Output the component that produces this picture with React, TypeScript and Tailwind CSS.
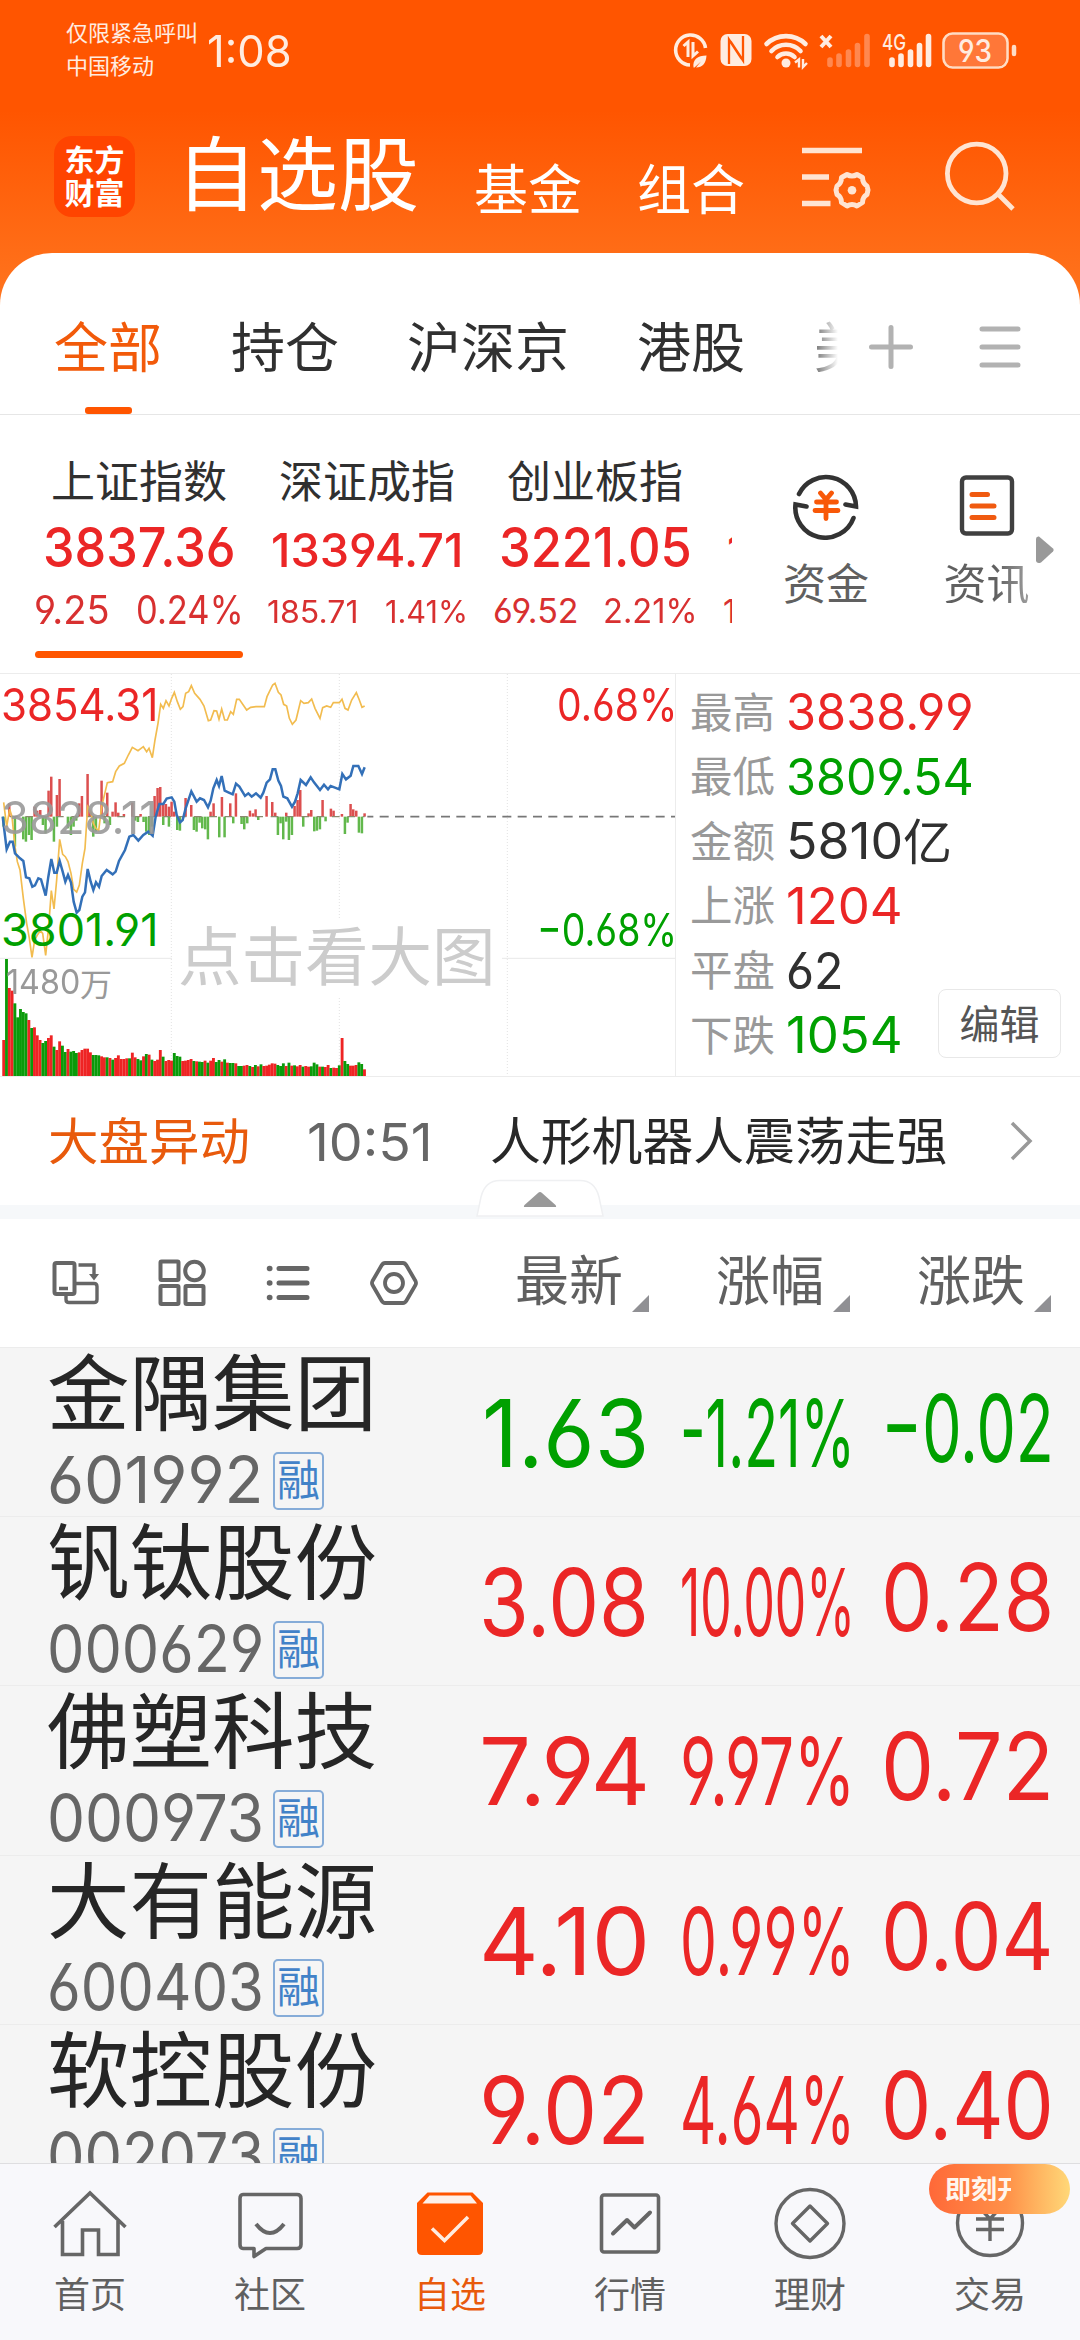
import { useLayoutEffect, useRef, useState } from 'react'
import type { ReactNode } from 'react'

/** Single-line label stretched horizontally so that it always fills `w` pixels. */
function Fit({ w, className = '', children }: { w: number; className?: string; children: ReactNode }) {
  const ref = useRef<HTMLSpanElement>(null)
  const [scale, setScale] = useState(1)
  useLayoutEffect(() => {
    const el = ref.current
    if (el && el.offsetWidth) setScale(w / el.offsetWidth)
  }, [w, children])
  return (
    <span className={'block shrink-0 leading-none ' + className} style={{ width: w }}>
      <span ref={ref} className="inline-block origin-left whitespace-nowrap align-top" style={{ transform: `scaleX(${scale})` }}>
        {children}
      </span>
    </span>
  )
}

const NUM = "font-['Inter',sans-serif] [font-feature-settings:'cv03','cv04'] "
const RED = 'text-[#eb2626] '
const GREEN = 'text-[#00a000] '

/* ---------- status bar ---------- */

function StatusIcons() {
  return (
    <svg className="mt-[28px] ml-[381px] shrink-0" width="350" height="44" viewBox="0 0 350 44" fill="none">
      <g stroke="#ffece0">
        <path d="M32.500 20A15 15 0 1 0 17 37" strokeWidth="3.600" />
        <path d="M10.500 18l4.500-4v15M20 14v14l5-4.500" strokeWidth="3" />
      </g>
      <path d="M20.500 39.500c-1-8 4-12 13-12-.5 8-4 12-10.500 12l5-6-6.500 6z" fill="#ffece0" />
      <rect x="47.500" y="6" width="31" height="32" rx="7" fill="#ffece0" />
      <path d="M56 36V11.500l12.500 19M70 8v24.500L57.500 13.500" stroke="#ff5500" strokeWidth="2.300" />
      <g stroke="#ffece0" strokeWidth="4.600" strokeLinecap="round">
        <path d="M93.500 16a28 28 0 0 1 39 0M98.500 23a20 20 0 0 1 29 0M104.500 29a12 12 0 0 1 17 0" />
      </g>
      <circle cx="113" cy="35" r="4.500" fill="#ffece0" />
      <path d="M122 34.500l4-3v8M130 31v8l4-4" stroke="#ffece0" strokeWidth="2.400" />
      <path d="M148 8l10 11M158 8l-10 11" stroke="#ffece0" strokeWidth="4" />
      <g stroke="#ff8850" strokeWidth="5.600" strokeLinecap="round">
        <path d="M157 32v4.500M166 28v8.500M175.500 24v12.500M184.500 17.500v19M194 8.500v28" />
      </g>
      <g stroke="#ffece0" strokeWidth="5.600" strokeLinecap="round">
        <path d="M219 32v4.500M228 28v8.500M237.500 24v12.500M246.500 17.500v19M255.500 8.500v28" />
      </g>
      <text x="209" y="22" fontSize="21" fontWeight="500" fill="#ffece0" fontFamily="Inter, sans-serif" textLength="24" lengthAdjust="spacingAndGlyphs">4G</text>
      <rect x="271" y="6" width="62" height="32" rx="8" fill="#ff7738" />
      <rect x="270.500" y="5.500" width="64" height="34" rx="9" stroke="#ffdcc4" strokeWidth="2.600" />
      <path d="M341 19v7" stroke="#ffdcc4" strokeWidth="4.500" strokeLinecap="round" />
      <text x="285" y="33.500" fontSize="31" fontWeight="500" fill="#ffece0" fontFamily="Inter, sans-serif" textLength="34" lengthAdjust="spacingAndGlyphs" className="[font-feature-settings:'cv03','cv04']">93</text>
    </svg>
  )
}

function Header() {
  return (
    <header className="h-[253px] shrink-0 text-white">
      <div className="flex h-[104px] items-start pl-[66px] text-[#ffece0]">
        <div className="flex w-[141px] shrink-0 flex-col pt-[20px] text-[22px] leading-none">
          <span>仅限紧急呼叫</span>
          <span className="mt-[11px]">中国移动</span>
        </div>
        <Fit w={85} className={NUM + 'mt-[29px] text-[44px]'}>1:08</Fit>
        <StatusIcons />
      </div>
      <div className="flex items-start pl-[54px]">
        <div className="mt-[32px] flex size-[81px] shrink-0 flex-col items-center rounded-[18px] bg-[#ff4400] pt-[6px] text-[30px] leading-[33px] font-bold">
          <span>东方</span>
          <span>财富</span>
        </div>
        <span className="mt-[24px] ml-[41px] w-[243px] shrink-0 text-[81px] leading-none">自选股</span>
        <span className="mt-[56px] ml-[55px] w-[108px] shrink-0 text-[54px] leading-none">基金</span>
        <span className="mt-[56px] ml-[55px] w-[108px] shrink-0 text-[54px] leading-none">组合</span>
        <svg className="mt-[39px] ml-[57px] shrink-0" width="72" height="70" viewBox="0 0 72 70" fill="none" stroke="#ffe4d2" strokeWidth="5.500">
          <path d="M0 7.500h60M0 34h27M0 60.500h28.500" />
          <path strokeWidth="5" strokeLinejoin="round" d="M45 31.500Q50 34.500 55 31.500L60.500 34.500Q60.500 40 65 43L66 47L65 51.500Q60.500 54 60.500 59.500L55 63Q50 60 45 63L39.500 59.500Q39.500 54 35 51.500L34 47L35 43Q39.500 40 39.500 34.500Z" />
          <circle cx="50" cy="47.300" r="4.300" fill="#ffe4d2" stroke="none" />
        </svg>
        <svg className="mt-[34px] ml-[70px] shrink-0" width="76" height="76" viewBox="0 0 76 76" fill="none" stroke="#ffe4d2" strokeWidth="4.800">
          <circle cx="32.700" cy="35.500" r="29.300" />
          <path d="M54 56l15 15" />
        </svg>
      </div>
    </header>
  )
}

/* ---------- group tabs ---------- */

function GroupTabs() {
  return (
    <div className="flex h-[162px] shrink-0 items-start border-b border-[#e6e6e6] pl-[54px] text-[54px] leading-none text-[#303030]">
      <div className="flex w-[108px] shrink-0 flex-col items-center pt-[65px] text-[#f25a0a]">
        <span>全部</span>
        <span className="mt-[35px] h-[7px] w-[47px] rounded-[3px] bg-[#ff5500]" />
      </div>
      <span className="mt-[65px] ml-[69px] w-[108px] shrink-0">持仓</span>
      <span className="mt-[65px] ml-[68px] w-[162px] shrink-0">沪深京</span>
      <span className="mt-[65px] ml-[68px] w-[108px] shrink-0">港股</span>
      <span className="mt-[65px] ml-[69px] w-[24px] shrink-0 overflow-hidden bg-linear-to-r from-[#707070] to-white bg-clip-text text-transparent">美</span>
      <svg className="mt-[71px] ml-[30px] shrink-0" width="46" height="46" viewBox="0 0 46 46" stroke="#b2b2b2" strokeWidth="5" strokeLinecap="round">
        <path d="M3.500 23h39M23 3.500v39" />
      </svg>
      <svg className="mt-[71px] ml-[63px] shrink-0" width="46" height="46" viewBox="0 0 46 46" stroke="#b2b2b2" strokeWidth="5" strokeLinecap="round">
        <path d="M5 5h36M5 23h36M5 41h36" />
      </svg>
    </div>
  )
}

/* ---------- indices ---------- */

function IndexCard({ name, value, vw, vc, a, aw, b, bw, gap, sc, active }: {
  name: string; value: string; vw: number; vc: string; a: string; aw: number; b: string; bw: number; gap: number; sc: string; active?: boolean
}) {
  return (
    <div className="flex w-[228px] shrink-0 flex-col items-center pt-[42px]">
      <span className="text-[44px] leading-none text-[#303030]">{name}</span>
      <div className="mt-[19px] flex h-[54px] items-center">
        <Fit w={vw} className={NUM + RED + 'font-medium ' + vc}>{value}</Fit>
      </div>
      <div className="mt-[15px] flex h-[40px] items-end" style={{ columnGap: gap }}>
        <Fit w={aw} className={NUM + 'text-[#d83030] ' + sc}>{a}</Fit>
        <Fit w={bw} className={NUM + 'text-[#d83030] ' + sc}>{b}</Fit>
      </div>
      {active && <span className="mt-[22px] h-[7px] w-[208px] rounded-full bg-[#ff5500]" />}
    </div>
  )
}

function IndexStrip() {
  return (
    <div className="flex h-[258px] shrink-0 items-start">
      <div className="flex w-[732px] shrink-0 overflow-hidden pl-[25px]">
        <IndexCard name="上证指数" value="3837.36" vw={193} vc="text-[55px]" a="9.25" aw={76} b="0.24%" bw={108} gap={26} sc="text-[39px]" active />
        <IndexCard name="深证成指" value="13394.71" vw={192} vc="pt-[5px] text-[47px]" a="185.71" aw={91} b="1.41%" bw={83} gap={27} sc="pb-[2px] text-[31px]" />
        <IndexCard name="创业板指" value="3221.05" vw={193} vc="text-[55px]" a="69.52" aw={86} b="2.21%" bw={94} gap={24} sc="pb-[1px] text-[34px]" />
        <div className="w-[40px] shrink-0">
          <div className={NUM + RED + 'mt-[112px] ml-[18px] text-[47px] leading-none font-medium'}>1</div>
          <div className={NUM + 'mt-[22px] ml-[14px] text-[32px] leading-none text-[#d83030]'}>1</div>
        </div>
      </div>
      <div className="flex w-[188px] shrink-0 flex-col items-center pt-[53px]">
        <svg width="72" height="72" viewBox="0 0 72 72" fill="none" strokeLinecap="round">
          <g stroke="#333" strokeWidth="4.600">
            <path d="M9 26A30 30 0 0 1 66 38.500L55.500 36.500M63.500 50A30 30 0 0 1 5.500 36.500L16.500 38.500" strokeLinejoin="miter" />
          </g>
          <path d="M30.500 25l5.500 6.500 5.500-6.500M26.500 34h20M25 42.500h23M36 31.500v19" stroke="#f85808" strokeWidth="4.800" />
        </svg>
        <span className="mt-[20px] text-[43px] leading-none text-[#606060]">资金</span>
      </div>
      <div className="flex w-[133px] shrink-0 flex-col items-center pt-[53px]">
        <svg width="72" height="72" viewBox="0 0 72 72" fill="none" strokeLinecap="round">
          <rect x="11" y="9.500" width="50" height="56" rx="4" stroke="#404040" strokeWidth="4.400" />
          <path d="M21 26.500h15.500M21 38h22M21 49.500h22" stroke="#f05a10" strokeWidth="5" />
        </svg>
        <span className="mt-[20px] bg-linear-to-r from-[#606060] from-60% to-[#a0a0a0] bg-clip-text text-[43px] leading-none text-transparent">资讯</span>
      </div>
      <svg className="mt-[121px] -ml-[17px] shrink-0" width="20" height="28" viewBox="0 0 20 28">
        <path d="M0 3Q0 0 3 0.500L17 12.500Q18.500 14 17 15.500L5 26.500Q1 28 0 25Z" fill="#999" />
      </svg>
    </div>
  )
}

/* ---------- intraday chart ---------- */

const X0 = 11
const STEP = 8.39
const BASE = 1248

// One entry per minute: top of the volume bar and its direction.
const VOLUME =
  '1140r 897g 984r 992r 1030g 1072g 1047g 1056g 1060g 1080r 1104g 1102r 1126r 1140r 1149g 1143g 1134r 1126r 1160g 1170r 1144r 1157g 1176g 1167r 1175g 1173g 1179g 1177r 1170r 1166r 1166r 1177r 1185g 1185g 1186g 1189r 1192r 1192g 1194r 1199g 1194r 1186r 1197r 1197r 1195r 1195g 1178r 1192r 1197g 1201g 1189r 1182g 1184r 1199g 1203r 1199r 1170r 1190g 1203r 1200r 1202r 1179g 1188g 1190g 1203r 1202r 1200r 1197r 1203g 1204r 1205g 1206g 1202r 1208g 1202r 1194r 1206g 1200g 1205r 1198g 1208r 1209g 1209g 1210r 1218g 1218g 1217r 1215r 1218g 1221r 1215g 1219r 1213g 1218r 1217r 1214r 1210r 1211r 1215g 1218g 1210g 1218r 1208g 1217r 1216g 1219r 1215r 1220g 1218r 1220r 1219g 1208g 1213g 1220r 1220g 1221r 1215r 1224g 1223r 1224r 1216g 1134r 1203g 1212g 1217r 1217r 1215r 1207g 1212g 1228r'
    .split(' ')
    .map((s) => ({ top: parseInt(s, 10), up: s.endsWith('r') }))

const UP_BARS: [number, number][] = [[28, 430], [104, 440], [112, 452], [121, 450], [146, 392], [154, 350], [171, 405], [179, 357], [238, 430], [246, 408], [263, 342], [271, 455], [305, 362], [322, 398], [338, 455], [347, 427], [355, 458], [372, 462], [397, 428], [422, 462], [464, 408], [473, 384], [481, 381], [490, 430], [498, 432], [507, 440], [515, 425], [523, 455], [557, 414], [574, 435], [632, 455], [641, 430], [666, 411], [691, 430], [708, 400], [750, 452], [767, 448], [759, 460], [800, 408], [817, 426], [826, 458], [859, 458], [884, 438], [893, 420], [901, 390], [926, 460], [934, 450], [968, 420], [993, 446], [1001, 452], [1026, 462], [1052, 432], [1060, 448], [1069, 452], [1094, 460]]
const DOWN_BARS: [number, number][] = [[11, 500], [45, 560], [70, 538], [78, 545], [87, 525], [95, 540], [129, 495], [137, 520], [162, 545], [171, 500], [204, 505], [213, 525], [221, 500], [229, 482], [280, 530], [288, 515], [314, 490], [330, 495], [406, 482], [414, 486], [431, 486], [439, 515], [448, 525], [456, 500], [490, 495], [507, 500], [532, 510], [540, 512], [582, 510], [590, 515], [599, 488], [607, 505], [616, 508], [624, 538], [658, 532], [674, 532], [700, 490], [725, 492], [733, 508], [742, 490], [775, 480], [834, 525], [842, 490], [850, 538], [859, 485], [867, 540], [876, 525], [910, 500], [943, 514], [951, 512], [960, 508], [977, 484], [1035, 522], [1043, 488], [1077, 518], [1086, 520]]

const PRICE = '8,470 20,568 30,545 38,545 45,580 60,595 70,603 78,652 88,655 97,680 105,676 115,655 123,658 137,707 145,650 154,597 163,638 170,638 179,603 188,635 196,665 204,645 213,668 221,725 230,758 238,750 247,710 255,697 263,627 272,665 280,690 288,667 297,680 305,648 320,630 338,643 347,635 357,603 375,570 388,530 400,525 415,542 430,525 445,515 458,527 467,470 478,432 490,432 500,416 515,412 523,425 530,465 540,487 548,480 557,445 574,394 590,425 600,415 612,420 624,442 632,422 640,385 650,360 657,378 665,348 674,392 685,397 698,403 708,371 718,380 735,408 745,400 755,410 768,400 782,413 790,398 800,368 810,358 818,328 826,328 835,362 843,378 850,410 862,415 876,440 885,425 893,400 902,360 918,375 932,352 942,367 960,390 972,374 984,388 992,378 1003,382 1018,388 1027,342 1038,358 1052,347 1060,318 1075,318 1086,342 1094,322'
const AVERAGE = '11,427 20,500 29,448 36,470 45,560 52,605 60,630 70,715 80,790 88,835 96,892 104,840 112,825 121,812 128,820 137,886 146,800 154,692 162,747 170,660 179,538 188,583 196,590 204,605 213,640 221,688 230,696 238,675 247,610 255,565 263,440 272,455 280,490 288,505 296,512 305,440 322,368 338,365 347,335 358,318 373,310 385,285 397,262 414,272 430,260 440,275 447,265 457,293 465,240 474,190 482,133 490,145 498,122 507,138 515,115 523,97 532,125 541,148 549,140 557,100 566,95 574,77 584,100 600,118 612,138 625,182 632,180 642,152 650,153 657,178 665,147 674,180 682,180 692,155 700,163 710,118 718,118 740,150 752,142 768,140 793,140 801,110 818,75 825,70 835,97 843,105 851,133 860,138 868,175 877,193 888,180 902,122 912,130 925,128 935,117 945,145 960,175 968,143 980,138 992,142 1000,128 1018,128 1026,118 1035,145 1044,150 1055,120 1069,98 1078,120 1086,142 1094,138'

function Chart() {
  return (
    <div className="relative h-full w-[676px] shrink-0 border-r border-[#ececec]">
      <svg className="block" width="675" height="403" viewBox="0 42 2025 1209" fill="none">
        <g stroke="#e2e2e2" strokeWidth="3" strokeDasharray="3 6">
          <path d="M514 42V1248M1018 42V1248M1522 42V1248" />
        </g>
        <path d="M0 895H2025" stroke="#e8e8e8" strokeWidth="3" />
        <path d="M1102 470H2025" stroke="#777" strokeWidth="5" strokeDasharray="27 19" strokeDashoffset="9" />
        {UP_BARS.map(([x, y]) => <rect key={x} x={x - 4} y={y} width="7.500" height={470 - y} fill="#dc4f4f" />)}
        {DOWN_BARS.map(([x, y]) => <rect key={x} x={x - 4} y="470" width="7.500" height={y - 470} fill="#62b84c" />)}
        <path d="M30 470H1094" stroke="#8a8a70" strokeWidth="4" strokeDasharray="23 23" />
        {VOLUME.map((v, i) => <rect key={i} x={X0 + i * STEP - 4.2} y={v.top} width="8.600" height={BASE - v.top} fill={v.up ? '#ee2424' : '#0a9a0a'} />)}
        <polyline points={AVERAGE} stroke="#f2bc4f" strokeWidth="5" />
        <polyline points={PRICE} stroke="#3370b8" strokeWidth="7.500" />
      </svg>
      <Fit w={157} className={NUM + RED + 'absolute top-[8px] left-[1px] text-[45px]'}>3854.31</Fit>
      <Fit w={157} className={NUM + 'absolute top-[121px] left-[1px] text-[45px] text-[#999]/90'}>3828.11</Fit>
      <Fit w={157} className={NUM + GREEN + 'absolute top-[233px] left-[1px] text-[45px]'}>3801.91</Fit>
      <Fit w={120} className={NUM + RED + 'absolute top-[8px] -right-[2px] text-[45px]'}>0.68%</Fit>
      <Fit w={140} className={NUM + GREEN + 'absolute top-[233px] -right-[2px] text-[45px]'}>−0.68%</Fit>
      <div className="absolute top-[291px] left-[6px] flex items-center text-[32px] leading-none text-[#999]">
        <Fit w={74} className={NUM + 'text-[34px]'}>1480</Fit>
        <span>万</span>
      </div>
      <div className="absolute top-[246px] left-[172px] w-[330px] bg-white pt-[1px] pb-[12px] pl-[6px] text-[63.500px] leading-none whitespace-nowrap text-[#ccc]">
        点击看大图
      </div>
    </div>
  )
}

const STATS = [
  { label: '最高', value: '3838.99', w: 188, color: RED },
  { label: '最低', value: '3809.54', w: 188, color: GREEN },
  { label: '金额', value: '5810', w: 117, unit: '亿', color: 'text-[#303030] ' },
  { label: '上涨', value: '1204', w: 117, color: RED },
  { label: '平盘', value: '62', w: 58, color: 'text-[#303030] ' },
  { label: '下跌', value: '1054', w: 117, color: GREEN },
]

function Market() {
  return (
    <div className="flex h-[404px] shrink-0 border-y border-[#ececec]">
      <Chart />
      <div className="relative flex-1 pt-[6px] pl-[14px]">
        {STATS.map((s) => (
          <div key={s.label} className="flex h-[64.600px] items-center">
            <span className="-mt-[5px] w-[96px] shrink-0 text-[42.500px] leading-none text-[#999]">{s.label}</span>
            <Fit w={s.w} className={NUM + s.color + 'text-[50px]'}>{s.value}</Fit>
            {s.unit && <span className="-mt-[6px] text-[49px] leading-none text-[#303030]">{s.unit}</span>}
          </div>
        ))}
        <div className="absolute top-[315px] right-[19px] flex h-[69px] w-[123px] items-center justify-center rounded-[8px] border border-[#e8e8e8] bg-white text-[40px] leading-none text-[#555]">
          <span className="-mt-[4px]">编辑</span>
        </div>
      </div>
    </div>
  )
}

/* ---------- alert line ---------- */

function Alert() {
  return (
    <div className="h-[128px] shrink-0">
      <div className="flex items-start pl-[48px] text-[50.500px] leading-none">
        <span className="mt-[36px] w-[203px] shrink-0 text-[#e85a0c]">大盘异动</span>
        <Fit w={126} className={NUM + 'mt-[40px] ml-[56px] text-[52px] text-[#666]'}>10:51</Fit>
        <span className="mt-[36px] ml-[57px] w-[457px] shrink-0 text-[50.800px] leading-none whitespace-nowrap text-[#282828]">人形机器人震荡走强</span>
        <svg className="mt-[43px] ml-[62px] shrink-0" width="26" height="42" viewBox="0 0 26 42" fill="none" stroke="#999" strokeWidth="3.500">
          <path d="M3 3l18 18L3 39" />
        </svg>
      </div>
    </div>
  )
}

function Divider() {
  return (
    <div className="relative h-[14px] shrink-0 bg-[#f6f8fa]">
      <svg className="absolute -top-[26px] left-[476px]" width="128" height="40" viewBox="0 0 128 40">
        <path d="M1 37L5 18Q9 1.500 24 1.500H104Q119 1.500 123 18L127 37Z" fill="#fff" stroke="#eff0f2" strokeWidth="1.500" />
        <path d="M49 28Q47 28 48.500 26L62 14Q64 12 66 14L79.500 26Q81 28 79 28Z" fill="#999" />
      </svg>
    </div>
  )
}

/* ---------- watch list ---------- */

function Sort({ label }: { label: string }) {
  return (
    <div className="flex w-[134px] shrink-0 items-start">
      <span className="mt-[32px] w-[108px] shrink-0 text-[54px] leading-none text-[#606060]">{label}</span>
      <svg className="mt-[76px] ml-[9px] shrink-0" width="17" height="17" viewBox="0 0 17 17"><path d="M17 0v17H0z" fill="#909094" /></svg>
    </div>
  )
}

function Toolbar() {
  return (
    <div className="flex h-[128px] shrink-0 items-start pl-[51px]">
      <svg className="mt-[40px] shrink-0" width="50" height="48" viewBox="0 0 50 48" fill="none" stroke="#666" strokeWidth="4">
        <rect x="3.500" y="4" width="20" height="31" rx="2" />
        <path d="M8 29.500h9" strokeWidth="3.500" />
        <path d="M24 24.500h19q3 0 3 3v13q0 3-3 3H18q-3 0-3-3V36" strokeWidth="3.400" />
        <path d="M27.500 6H43v12" strokeWidth="3.400" />
        <path d="M38 15h10l-5 6.500z" fill="#666" stroke="none" />
      </svg>
      <svg className="mt-[40px] ml-[56px] shrink-0" width="50" height="48" viewBox="0 0 50 48" fill="none" stroke="#666" strokeWidth="4">
        <rect x="3.500" y="2.500" width="18" height="18.500" rx="1" />
        <circle cx="37.500" cy="12" r="9.300" />
        <rect x="3.500" y="27" width="18" height="18" rx="1" />
        <rect x="28.500" y="27" width="18" height="18" rx="1" />
      </svg>
      <svg className="mt-[40px] ml-[57px] shrink-0" width="50" height="48" viewBox="0 0 50 48" fill="none" stroke="#666" strokeWidth="5" strokeLinecap="round">
        <path d="M15 9.500h28M15 24h28M15 38.500h28" />
        <path d="M5.500 9.500h.3M5.500 24h.3M5.500 38.500h.3" strokeWidth="5.500" />
      </svg>
      <svg className="mt-[40px] ml-[55px] shrink-0" width="50" height="48" viewBox="0 0 50 48" fill="none" stroke="#666" strokeWidth="3.800" strokeLinejoin="round">
        <path d="M16 4h18q2 0 3.500 2.500L46.500 22q1 2 0 4L37.500 41.500Q36 44 34 44H16q-2 0-3.500-2.500L3.500 26q-1-2 0-4L12.500 6.500Q14 4 16 4Z" />
        <circle cx="25" cy="24" r="9" />
      </svg>
      <div className="ml-[96px] flex gap-[67px]">
        <Sort label="最新" />
        <Sort label="涨幅" />
        <Sort label="涨跌" />
      </div>
    </div>
  )
}

const STOCKS = [
  { name: '金隅集团', code: '601992', price: '1.63', pct: '-1.21%', diff: '−0.02', pw: 'ml-[3px]', w: 167, color: GREEN },
  { name: '钒钛股份', code: '000629', price: '3.08', pct: '10.00%', diff: '0.28', pw: '', w: 170, color: RED },
  { name: '佛塑科技', code: '000973', price: '7.94', pct: '9.97%', diff: '0.72', pw: '', w: 171, color: RED },
  { name: '大有能源', code: '600403', price: '4.10', pct: '0.99%', diff: '0.04', pw: '', w: 171, color: RED },
  { name: '软控股份', code: '002073', price: '9.02', pct: '4.64%', diff: '0.40', pw: '', w: 171, color: RED },
]

function StockList() {
  return (
    <div className="min-h-0 flex-1 overflow-hidden border-t border-[#ececec] bg-[#f5f5f5]">
      {STOCKS.map((s) => (
        <div key={s.code} className="flex h-[169.200px] items-start border-b border-[#ececec] pl-[47px]">
          <div className="w-[432px] shrink-0">
            <div className="-mt-[1px] text-[82.500px] leading-none whitespace-nowrap text-[#262626]">{s.name}</div>
            <div className="mt-[17px] flex items-start">
              <Fit w={217} className={NUM + 'text-[65px] text-[#666]'}>{s.code}</Fit>
              <div className="mt-[5px] ml-[9px] flex h-[58px] w-[51px] items-start justify-center rounded-[5px] border-2 border-[#86acd8] pt-[2px] text-[43px] leading-none text-[#4282c8]">融</div>
            </div>
          </div>
          <div className="flex w-[172px] shrink-0">
            <Fit w={s.w} className={NUM + s.color + s.pw + ' mt-[39px] text-[93px]'}>{s.price}</Fit>
          </div>
          <Fit w={175} className={NUM + s.color + 'mt-[39px] ml-[29px] text-[93px]'}>{s.pct}</Fit>
          <Fit w={173} className={NUM + s.color + 'mt-[34px] ml-[26px] text-[93px]'}>{s.diff}</Fit>
        </div>
      ))}
    </div>
  )
}

/* ---------- bottom navigation ---------- */

function NavIcon({ id }: { id: string }) {
  const common = { className: 'block', width: 80, height: 80, viewBox: '0 0 80 80', fill: 'none', stroke: '#666', strokeWidth: 3.6 }
  switch (id) {
    case 'home':
      return <svg {...common}><path d="M4.500 44L40 10l35.500 34M12.500 38v33.500h20V47h16v24.500H68V38" /></svg>
    case 'community':
      return <svg {...common}><path d="M13 11.500h54q4 0 4 4v46q0 4-4 4H36l-12 8v-8H13q-3 0-3-4V15.500q0-4 3-4Z" strokeLinejoin="round" /><path d="M26 41q14 18 28 0" strokeWidth="4" /></svg>
    case 'watch':
      return (
        <svg {...common} stroke="none">
          <path d="M17.500 9.500H62.500L73 20V67q0 5-5 5H12q-5 0-5-5V20Z" fill="#ff5500" />
          <path d="M19.500 12.500h41L67 20.500H12.500Z" fill="#fdf1ea" />
          <path d="M22 45.500l12.500 12L58 34" stroke="#ffece0" strokeWidth="3.500" />
        </svg>
      )
    case 'market':
      return <svg {...common}><rect x="11.500" y="12" width="57" height="57" rx="2.500" /><path d="M23 50.500l14-13.500 7.500 7.500 15.500-15" strokeLinecap="round" strokeLinejoin="round" strokeWidth="4" /></svg>
    case 'wealth':
      return <svg {...common} strokeWidth={3.4}><circle cx="40" cy="40.500" r="34" /><path d="M40 23L57.500 40.500 40 58 22.500 40.500Z" strokeLinejoin="round" /></svg>
    default:
      return <svg {...common} strokeWidth={3.4}><circle cx="40" cy="40" r="32.500" /><path d="M29 24l11 12 11-12M26 36h28M26 46.500h28M40 35v23" /></svg>
  }
}

const NAV = [
  ['home', '首页'], ['community', '社区'], ['watch', '自选'], ['market', '行情'], ['wealth', '理财'], ['trade', '交易'],
]

function BottomNav() {
  return (
    <nav className="relative flex h-[177px] shrink-0 border-t border-[#dedee0] bg-[#f8f8fb]">
      {NAV.map(([id, label]) => (
        <div key={id} className="flex w-[180px] shrink-0 flex-col items-center pt-[19px]">
          <NavIcon id={id} />
          <span className={'mt-[11px] text-[36px] leading-none ' + (id === 'watch' ? 'text-[#e85a0c]' : 'text-[#606060]')}>{label}</span>
        </div>
      ))}
      <div className="absolute top-0 left-[929px] flex h-[50px] w-[141px] items-center rounded-[25px] bg-linear-to-r from-[#ff6838] via-[#ff9048] via-55% to-[#ffd878] pl-[16px] text-[26px] leading-none font-bold text-[#fff6ee]">
        <span className="-mt-[2px] w-[66px] overflow-hidden whitespace-nowrap">即刻开</span>
      </div>
    </nav>
  )
}

export default function App() {
  return (
    <div className="flex h-[2340px] w-[1080px] flex-col overflow-hidden bg-[linear-gradient(to_bottom,#ff5500_110px,#ff741e_300px)] font-['Noto_Sans_CJK_SC',sans-serif]">
      <Header />
      <main className="flex min-h-0 flex-1 flex-col overflow-hidden rounded-t-[52px] bg-white">
        <GroupTabs />
        <IndexStrip />
        <Market />
        <Alert />
        <Divider />
        <Toolbar />
        <StockList />
        <BottomNav />
      </main>
    </div>
  )
}
